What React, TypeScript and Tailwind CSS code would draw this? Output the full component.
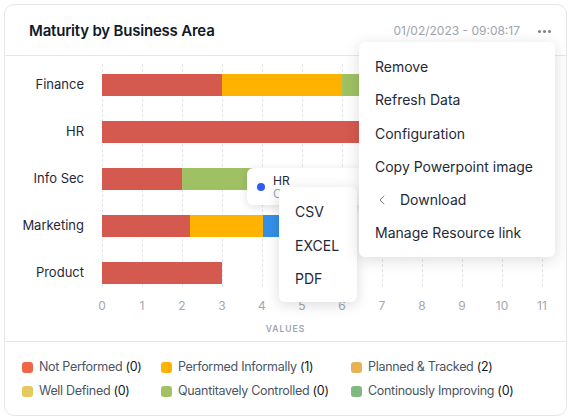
import { ChevronLeft } from 'lucide-react';

type Segment = { value: number; color: string };

interface Row {
  label: string;
  segments: Segment[];
}

const RED = '#d45a4f';
const YELLOW = '#ffb200';
const GREEN = '#9fc163';
const BLUE = '#3490e6';

const rows: Row[] = [
  { label: 'Finance', segments: [{ value: 3, color: RED }, { value: 3, color: YELLOW }, { value: 1.5, color: GREEN }] },
  { label: 'HR', segments: [{ value: 8, color: RED }] },
  { label: 'Info Sec', segments: [{ value: 2, color: RED }, { value: 3, color: GREEN }] },
  { label: 'Marketing', segments: [{ value: 2.2, color: RED }, { value: 1.83, color: YELLOW }, { value: 1, color: BLUE }] },
  { label: 'Product', segments: [{ value: 3, color: RED }] },
];

const ticks = [0, 1, 2, 3, 4, 5, 6, 7, 8, 9, 10, 11];
const UNIT = 40;

const legend = [
  { label: 'Not Performed', count: 0, color: '#ee6647' },
  { label: 'Performed Informally', count: 1, color: '#ffb300' },
  { label: 'Planned & Tracked', count: 2, color: '#e9b057' },
  { label: 'Well Defined', count: 0, color: '#e6c95c' },
  { label: 'Quantitavely Controlled', count: 0, color: '#a1c163' },
  { label: 'Continously Improving', count: 0, color: '#80b87f' },
];

const menuItems = ['Remove', 'Refresh Data', 'Configuration', 'Copy Powerpoint image'];

export default function App() {
  return (
    <div className="p-1 bg-white font-['Inter',sans-serif]">
      <div className="relative w-[563px] h-[412px] rounded-[10px] border border-[#e4e7ec] bg-white overflow-hidden">
        {/* Header */}
        <div className="flex items-center h-[51px] pl-6 pr-[15px] border-b border-[#e4e7ec]">
          <h3 className="text-[15px] font-semibold text-[#111827] tracking-[-0.2px] pt-[2px]">
            Maturity by Business Area
          </h3>
          <span className="ml-auto text-[12px] text-[#a0a4b0] pt-[2px]">01/02/2023 - 09:08:17</span>
          <div className="flex gap-[2px] ml-[18px] pt-[2px]">
            <span className="w-[3px] h-[3px] rounded-full bg-[#7b8190]" />
            <span className="w-[3px] h-[3px] rounded-full bg-[#7b8190]" />
            <span className="w-[3px] h-[3px] rounded-full bg-[#7b8190]" />
          </div>
        </div>

        {/* Chart */}
        <div className="h-[286px] border-b border-[#e4e7ec]">
          <div className="relative pt-[18px]">
            {/* grid lines */}
            <div className="absolute left-[97px] top-[8px] h-[223px] w-[440px]">
              {ticks.map((t) => (
                <div
                  key={t}
                  className="absolute top-0 bottom-0 border-l border-dashed border-[#e3e5ea]"
                  style={{ left: t * UNIT }}
                />
              ))}
            </div>
            <div className="relative flex flex-col gap-[25px]">
              {rows.map((row) => (
                <div key={row.label} className="flex items-center h-[22px]">
                  <div className="w-[97px] pr-[18px] text-right text-[13px] text-[#1f2937]">{row.label}</div>
                  <div className="flex h-[22px] w-[440px]">
                    {row.segments.map((s, i) => (
                      <div key={i} className="h-full" style={{ width: s.value * UNIT, backgroundColor: s.color }} />
                    ))}
                  </div>
                </div>
              ))}
            </div>
          </div>
          {/* ticks */}
          <div className="relative ml-[97px] mt-[13px] h-[16px] w-[440px]">
            {ticks.map((t) => (
              <span
                key={t}
                className="absolute top-0 -translate-x-1/2 text-[12px] text-[#a3a7b2]"
                style={{ left: t * UNIT }}
              >
                {t}
              </span>
            ))}
          </div>
          <div className="mt-[11px] text-center leading-[11px] text-[8.5px] font-semibold tracking-[1px] text-[#9ea3ae]">
            VALUES
          </div>
        </div>

        {/* Legend */}
        <div className="grid grid-cols-[139px_190px_1fr] gap-y-[9px] pl-[17px] pt-[18px]">
          {legend.map((l) => (
            <div key={l.label} className="flex items-center gap-[6px] h-[15px]">
              <span className="w-[11px] h-[11px] rounded-[3px]" style={{ backgroundColor: l.color }} />
              <span className="text-[12.5px] text-[#4b5563] tracking-[-0.3px]">
                {l.label} <span className="text-[#111827]">({l.count})</span>
              </span>
            </div>
          ))}
        </div>

        {/* Tooltip */}
        <div className="absolute left-[242px] top-[163px] w-[140px] h-[37px] rounded-md bg-white shadow-[0_2px_10px_rgba(0,0,0,0.12)] flex items-center pl-[10px] gap-[8px]">
          <span className="w-[8px] h-[8px] rounded-full bg-[#2f5cf5]" />
          <div className="leading-[13px] text-[12px]">
            <div className="text-[#1f2937]">HR</div>
            <div className="text-[#9ca3af]">Count</div>
          </div>
        </div>

        {/* Download submenu */}
        <div className="absolute left-[274px] top-[182px] w-[78px] h-[115px] rounded-md bg-white shadow-[0_3px_14px_rgba(0,0,0,0.14)] flex flex-col pt-[15px] pl-4 gap-[14.5px] text-[14px] text-[#1f2937]">
          <span className="leading-[19px]">CSV</span>
          <span className="leading-[19px]">EXCEL</span>
          <span className="leading-[19px]">PDF</span>
        </div>

        {/* Context menu */}
        <div className="absolute left-[354px] top-[37px] w-[196px] h-[215px] rounded-md bg-white shadow-[0_3px_16px_rgba(0,0,0,0.14)] flex flex-col pt-[15px] pl-4 gap-[14px] text-[14px] text-[#1f2937]">
          {menuItems.map((m) => (
            <span key={m} className="leading-[19.3px]">{m}</span>
          ))}
          <span className="flex items-center leading-[19.3px]">
            <ChevronLeft className="w-4 h-4 text-[#7b8190] -ml-[1px] mr-[10px]" strokeWidth={1.5} />
            Download
          </span>
          <span className="leading-[19.3px]">Manage Resource link</span>
        </div>
      </div>
    </div>
  );
}
